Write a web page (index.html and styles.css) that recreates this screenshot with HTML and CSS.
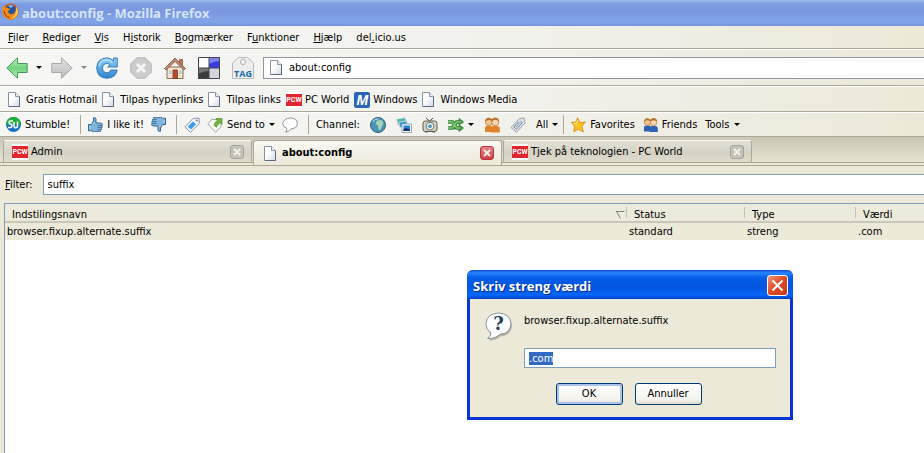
FILE: index.html
```html
<!DOCTYPE html>
<html lang="da">
<head>
    <meta charset="UTF-8">
    <meta name="viewport" content="width=device-width, initial-scale=1.0">
    <title>about:config - Mozilla Firefox</title>
    <link rel="stylesheet" href="styles.css">
</head>
<body>
    <!-- shared icons -->
    <svg class="defs" width="0" height="0">
        <defs>
            <linearGradient id="green" x1="0" y1="0" x2="0" y2="1">
                <stop offset="0" stop-color="#c9f5c0"/><stop offset="0.5" stop-color="#6fd27e"/><stop offset="1" stop-color="#b5efb0"/>
            </linearGradient>
            <linearGradient id="grey" x1="0" y1="0" x2="0" y2="1">
                <stop offset="0" stop-color="#e2e2e2"/><stop offset="1" stop-color="#bcbcbc"/>
            </linearGradient>
            <linearGradient id="blue" x1="0" y1="0" x2="0" y2="1">
                <stop offset="0" stop-color="#8fd0f5"/><stop offset="1" stop-color="#2f83cc"/>
            </linearGradient>
            <linearGradient id="paper" x1="0" y1="0" x2="1" y2="1">
                <stop offset="0.4" stop-color="#ffffff"/><stop offset="1" stop-color="#d3dbe6"/>
            </linearGradient>
            <symbol id="page" viewBox="0 0 12 15">
                <path d="M.5.5h7l4 4v10H.5z" fill="url(#paper)" stroke="#8592a6"/>
                <path d="M7.500.5v4h4" fill="#eef1f6" stroke="#8592a6"/>
                <path d="M1 14.500h10.500V5" fill="none" stroke="#5b6a80"/>
            </symbol>
            <symbol id="arrow" viewBox="0 0 22 22">
                <path d="M.8 11 11.500.8v5.700h9.700v9H11.500v5.700z"/>
            </symbol>
            <symbol id="thumb" viewBox="0 0 15 15">
                <path d="M.5 7.500h3l2-3.500V.8q2-.8 2.600 1.400l-.3 3.600 5.200.4q1.600.2 1.400 1.500l-.6 1.200.3 1.400-.8 1 .1 1.400-1 .7-.3 1.400H5.500l-2-1h-3z" fill="#7fb4dc" stroke="#34658f"/>
                <path d="M9.500 8.500h4M9.500 10.500h4M9.500 12.500h3" stroke="#34658f" stroke-width=".8"/>
                <path d="M2 9v3M4.500 7.500 7 5" stroke="#b8dcf3"/>
            </symbol>
            <symbol id="people" viewBox="0 0 16 16">
                <path d="M1 15v-4q0-2.500 3-2.500h2.500q2.500.5 2.500 3V15z" class="left"/>
                <path d="M7 15.500V11q0-2 3-2h3q2.800 0 2.800 3v3.500z" class="right"/>
                <circle cx="4.800" cy="5" r="3.400" fill="#f3c593" stroke="#a5642a" stroke-width=".6"/>
                <circle cx="11.200" cy="5.200" r="3.600" fill="#f8d4a8" stroke="#a5642a" stroke-width=".6"/>
                <path d="M1 4.500Q1.500.5 5 .8q2 .2 2.800 1.500Q9 .5 11.500.6q3.600.3 3.600 4.200-1.500-2-4-2-2 0-3 1.800-1.200-1.700-3-1.600Q2.800 3 1 4.500z" fill="#b8722c"/>
            </symbol>
        </defs>
    </svg>

    <header class="titlebar">
        <svg class="fox" width="17" height="17" viewBox="0 0 17 17">
            <circle cx="8.500" cy="8.500" r="8" fill="#d95b0b"/>
            <circle cx="8.800" cy="7" r="5.400" fill="#2c4f9c"/>
            <path d="M6 2.500q3-1.500 6 .5-2 .3-2.500 2-2-.2-3.500-2.500z" fill="#7fb0e8"/>
            <path d="M1 3q1.500.4 2.400 1.600 1.800-.4 3 .8 1 .4 2 .4-.3 1.400-2 1.800-.8 1.800.8 3 2.700 1.400 5-.6 2.200-2 1.300-5.400 2.600 2.200 2.300 5.800-.8 4.600-5.300 6Q4.500 17 1.500 12.500-.8 7.500 1 3z" fill="#f28a16"/>
            <path d="M14 3.500q2.800 3.500 1.300 7.500-2 4.300-6.300 4.600 3.500-1.800 4.600-5 1-3.300.4-7.100z" fill="#fbd24a"/>
            <path d="M2 8q.5 5 5.500 6.500" fill="none" stroke="#8a2c05"/>
        </svg>
        <span>about:config - Mozilla Firefox</span>
    </header>

    <div class="chrome">
        <nav class="menubar">
            <a href="#"><u>F</u>iler</a>
            <a href="#"><u>R</u>ediger</a>
            <a href="#"><u>V</u>is</a>
            <a href="#">H<u>i</u>storik</a>
            <a href="#"><u>B</u>ogmærker</a>
            <a href="#">F<u>u</u>nktioner</a>
            <a href="#"><u>H</u>jælp</a>
            <a href="#">del<u>.</u>icio.us</a>
        </nav>

        <div class="toolbar nav-bar">
            <button class="back" aria-label="Tilbage">
                <svg width="22" height="22" fill="url(#green)" stroke="#3f9a5c"><use href="#arrow"/></svg>
                <i class="caret"></i>
            </button>
            <button class="forward" aria-label="Frem">
                <svg class="flip" width="22" height="22" fill="url(#grey)" stroke="#aaaaaa"><use href="#arrow"/></svg>
                <i class="caret dim"></i>
            </button>
            <button aria-label="Genindlæs">
                <svg width="22" height="22" viewBox="0 0 22 22">
                    <path d="M17.500 1v3Q14.500.8 10.800.8.8 1.500.7 11.200 1.200 21 11 21.300q9-.5 10.200-8.300h-6.400q-1 2.800-3.800 2.800-4.300-.3-4.500-4.800.3-4.300 4.500-4.500 1.600 0 3 1.300L11.500 10h9.800V1z" fill="url(#blue)" stroke="#2a74b4" stroke-width=".9"/>
                    <path d="M3 9q1.500-5.500 8-6 3 0 5.500 2.500" fill="none" stroke="#bfe6fb" stroke-width="1.200"/>
                </svg>
            </button>
            <button aria-label="Stop">
                <svg width="22" height="22" viewBox="0 0 22 22">
                    <path d="M6.800.8h8.400l6 6v8.400l-6 6H6.800l-6-6V6.800z" fill="#cccccc" stroke="#b2b2b2"/>
                    <path d="m7 7 8 8M15 7l-8 8" stroke="#f7f7f7" stroke-width="3"/>
                </svg>
            </button>
            <button aria-label="Hjem">
                <svg width="22" height="22" viewBox="0 0 22 22">
                    <path d="M3 10h16v11.500H3z" fill="#f3e3cf" stroke="#8c6c56"/>
                    <path d="M15.500 2.500h3V9h-3z" fill="#c77052" stroke="#8c4e3c" stroke-width=".8"/>
                    <path d="M11 1 .5 11.500l1.500 1.500 9-8.500 9 8.500 1.500-1.500z" fill="#b98a76" stroke="#7c5545" stroke-width=".8"/>
                    <path d="M9 13h4.500v8.500H9z" fill="#b84b2d" stroke="#7c3a25" stroke-width=".8"/>
                    <path d="M5 14h2.500v3H5zM15 14h2.500v3H15z" fill="#b4cfe0"/>
                </svg>
            </button>
            <button aria-label="del.icio.us">
                <svg width="22" height="22" viewBox="0 0 22 22">
                    <path d="M0 0h11v11H0z" fill="#fff"/>
                    <path d="M11 0h11v11H11z" fill="#3a3ce0"/>
                    <path d="M0 11h11v11H0z" fill="#3c3c3c"/>
                    <path d="M11 11h11v11H11z" fill="#d4d4dc"/>
                    <path d="M11 7q5-3 11-3V0H11z" fill="#7f82f2"/>
                    <path d="M0 17q5-3 11-3v-3H0z" fill="#777"/>
                    <path d="M.5.5h21v21H.5zM11 0v22M0 11h22" fill="none" stroke="#44444c"/>
                </svg>
            </button>
            <button aria-label="Tag">
                <svg width="22" height="22" viewBox="0 0 22 22">
                    <path d="M6.500.5h9l6 5.500v15.500H.5V6z" fill="#eeeeee" stroke="#b9b9b9"/>
                    <circle cx="11" cy="5" r="2.500" fill="#fff" stroke="#aaa"/>
                    <text x="11" y="20" class="tag-text">TAG</text>
                </svg>
            </button>
            <label class="url">
                <svg width="12" height="15"><use href="#page"/></svg>
                <input type="text" value="about:config" aria-label="Adresse">
            </label>
        </div>

        <div class="toolbar bookmarks">
            <a href="#"><svg width="12" height="15"><use href="#page"/></svg>Gratis Hotmail</a>
            <a href="#"><svg width="12" height="15"><use href="#page"/></svg>Tilpas hyperlinks</a>
            <a href="#"><svg width="12" height="15"><use href="#page"/></svg>Tilpas links</a>
            <a href="#" class="site"><span class="pcw">PCW</span>PC World</a>
            <a href="#" class="site"><span class="msn">M</span>Windows</a>
            <a href="#"><svg width="12" height="15"><use href="#page"/></svg>Windows Media</a>
        </div>

        <div class="toolbar stumble">
            <div class="group">
                <button>
                    <svg width="15" height="15" viewBox="0 0 15 15">
                        <circle cx="7.500" cy="7.500" r="7.500" fill="#1a71c2"/>
                        <path d="M0 7.500a7.500 7.500 0 0 1 15 0z" fill="#1fae38"/>
                        <path d="M7 4H4.500Q3 4 3 5.500T4.500 7t1.500 1.700T4.500 10.500H2M8 5v4q0 1.800 1.800 1.800T11.500 9V4.500" fill="none" stroke="#fff" stroke-width="1.500"/>
                    </svg>Stumble!
                </button>
            </div>
            <div class="group like">
                <button><svg width="15" height="15"><use href="#thumb"/></svg>I like it!</button>
                <button aria-label="Not for me"><svg class="down" width="15" height="15"><use href="#thumb"/></svg></button>
            </div>
            <div class="group share">
                <button aria-label="Tag">
                    <svg width="16" height="16" viewBox="0 0 16 16">
                        <path d="M9 1.500 15 1l.4 5.500L6.500 15.300.8 10z" fill="#f3f6f9" stroke="#8a98a8"/>
                        <path d="m9 4.500 3 2.800L7 12.500 3.800 9.600z" fill="#3b9be6"/>
                        <circle cx="12.800" cy="3.500" r="1" fill="#6c7b8a"/>
                    </svg>
                </button>
                <button>
                    <svg width="16" height="16" viewBox="0 0 16 16">
                        <path d="M4.500 2.500h9.500V10l-5.500 5.200L.8 7z" fill="#f7f7f4" stroke="#a9aaa2"/>
                        <path d="M9 1.500h6v6l-1.800-1.800q-3 1.300-3.600 4.600L7 8.500q.3-3.300 3.600-5.400z" fill="#6fb53a" stroke="#3d8422" stroke-width=".6"/>
                    </svg>Send to<i class="caret"></i>
                </button>
                <button aria-label="Comment">
                    <svg width="16" height="16" viewBox="0 0 16 16">
                        <path d="M8.500 1q6.700.3 6.900 5.500-.2 5-6.400 5.300Q7 15 3.500 15.200q1.700-1.700 1.200-4Q.8 10 .7 6.500 1.500 1.300 8.500 1z" fill="#fff" stroke="#8d929b"/>
                    </svg>
                </button>
            </div>
            <div class="group channel">
                <span>Channel:</span>
                <button aria-label="Web">
                    <svg width="16" height="16" viewBox="0 0 16 16">
                        <circle cx="8" cy="8" r="7.500" fill="#4b93b8" stroke="#2c5f80"/>
                        <path d="M7 3.500 11.500 3l2 2.500-1.500 4-2 4-1.800-1.500L8 8.500 5.500 7z" fill="#a5d3b4"/>
                        <path d="M2.500 5Q4.500 1.500 8.500 1.800" fill="none" stroke="#c5e6ee"/>
                    </svg>
                </button>
                <button aria-label="Photos">
                    <svg width="16" height="16" viewBox="0 0 16 16">
                        <path d="m.5 2 9-1.500 1.300 6.500L2 8.500z" fill="#50b6a8" stroke="#dfe9ea"/>
                        <path d="m3 5 8-1v6l-7 .5z" fill="#319bd4" stroke="#c8d4da"/>
                        <path d="M6 7h9.500v8.500H6z" fill="#fff" stroke="#9aa5b0"/>
                        <path d="M7.500 8.500H14V14H7.500z" fill="#2184d8"/>
                        <path d="M7.500 14v-2l2.500-1 4 1.500V14z" fill="#122f66"/>
                    </svg>
                </button>
                <button aria-label="Video">
                    <svg width="16" height="16" viewBox="0 0 16 16">
                        <path d="M4 1l3.500 3L11 1" fill="none" stroke="#4c4b42"/>
                        <rect x="1" y="4" width="14" height="10.500" rx="2.500" fill="#d8d4c2" stroke="#5c5a4e"/>
                        <circle cx="8" cy="9.200" r="3.900" fill="#e9f0f2" stroke="#77776e"/>
                        <circle cx="8" cy="9.200" r="1.800" fill="#3f8fb5"/>
                        <path d="M3 15h2.500M10.500 15H13" stroke="#55544c"/>
                    </svg>
                </button>
                <button class="shuffle" aria-label="Shuffle">
                    <svg width="16" height="16" viewBox="0 0 16 16">
                        <path d="M0 5h4.500l4 6H12M0 11h4.500l4-6H12" fill="none" stroke="#2f7d31" stroke-width="3.500"/>
                        <path d="M11 1.500 15.500 5 11 8zM11 8l4.500 3-4.500 3.500z" fill="#3c9a3c" stroke="#2f7d31" stroke-width=".8"/>
                        <path d="M0 5h4.500l4 6H12M0 11h4.500l4-6H13" fill="none" stroke="#7dcb74" stroke-width="1.500"/>
                    </svg><i class="caret"></i>
                </button>
                <button aria-label="People"><svg class="orange" width="16" height="16"><use href="#people"/></svg></button>
                <button aria-label="Clip">
                    <svg width="16" height="16" viewBox="0 0 16 16">
                        <path d="M9.500 1.500 14 1l1.200 4.800-8.700 9.500L1 10.500z" fill="#dfe3e8" stroke="#98a1ac"/>
                        <path d="m10.500 4 1.800 1.600-5.800 6.600-2.600-2.200 4.700-5.200" fill="none" stroke="#758396"/>
                        <path d="m6 10 4.500-5" stroke="#6aa4d8"/>
                    </svg>
                </button>
                <button>All<i class="caret"></i></button>
            </div>
            <div class="group">
                <button>
                    <svg width="15" height="16" viewBox="0 0 15 16">
                        <path d="m6.500.8 2.300 4.700 5.500-.5-3.500 4.300 1.600 5.600-5-2.600-4.600 2.200.9-5L.5 5.300l4.500-.2z" fill="#fcc325" stroke="#d98910" stroke-width=".9"/>
                        <path d="M6.500 3 5.600 6.200l-3 .3" fill="none" stroke="#fff0a5"/>
                    </svg>Favorites
                </button>
                <button><svg class="redblue" width="15" height="16"><use href="#people"/></svg>Friends</button>
                <button>Tools<i class="caret"></i></button>
            </div>
        </div>
    </div>

    <div class="tabs">
        <div class="tab">
            <span class="pcw">PCW</span>
            <span class="tab-name">Admin</span>
            <button class="tab-close" aria-label="Luk"><svg width="8" height="8" viewBox="0 0 8 8"><path d="m1 1 6 6M7 1 1 7"/></svg></button>
        </div>
        <div class="tab active">
            <svg width="12" height="15"><use href="#page"/></svg>
            <span class="tab-name">about:config</span>
            <button class="tab-close" aria-label="Luk"><svg width="8" height="8" viewBox="0 0 8 8"><path d="m1 1 6 6M7 1 1 7"/></svg></button>
        </div>
        <div class="tab">
            <span class="pcw">PCW</span>
            <span class="tab-name">Tjek på teknologien - PC World</span>
            <button class="tab-close" aria-label="Luk"><svg width="8" height="8" viewBox="0 0 8 8"><path d="m1 1 6 6M7 1 1 7"/></svg></button>
        </div>
    </div>

    <main class="config">
        <div class="filter">
            <label for="filter"><u>F</u>ilter:</label>
            <input type="text" id="filter" value="suffix">
        </div>
        <div class="tree">
            <table>
                <thead>
                    <tr>
                        <th>Indstilingsnavn
                            <svg class="sort" width="9" height="8" viewBox="0 0 9 8"><path d="M8.500.5 4.500 7.500" stroke="#fff"/><path d="M0 .5h8.500M.5.5l4 7" fill="none" stroke="#85836f"/></svg>
                        </th>
                        <th class="status">Status</th>
                        <th class="type">Type</th>
                        <th class="value">Værdi</th>
                    </tr>
                </thead>
                <tbody>
                    <tr>
                        <td>browser.fixup.alternate.suffix</td>
                        <td>standard</td>
                        <td>streng</td>
                        <td>.com</td>
                    </tr>
                </tbody>
            </table>
        </div>
    </main>

    <form class="dialog" role="dialog" aria-labelledby="dialog-title">
        <div class="dialog-title">
            <span id="dialog-title">Skriv streng værdi</span>
            <button type="button" class="dialog-close" aria-label="Luk">
                <svg width="13" height="13" viewBox="0 0 13 13"><path d="m1.500 1.500 10 10M11.500 1.500l-10 10" stroke="#fff" stroke-width="2"/></svg>
            </button>
        </div>
        <div class="dialog-body">
            <div class="prompt">
                <svg width="28" height="30" viewBox="0 0 28 30">
                    <path d="M14.500 3q12 .6 12.500 10.800-.7 9.500-11 10.500Q11 28.800 3.500 28.500q4-2.500 3.300-6Q2 19.500 2 13.500 3 3.600 14.500 3z" fill="#b9b5a6"/>
                    <path d="M13.500 1q12 .6 12.500 10.800-.7 9.500-11 10.500Q10 27 2.500 26.500q4-2.500 3.300-6Q1 17.500 1 11.500 2 1.600 13.500 1z" fill="#fbfcfd" stroke="#8b949e"/>
                    <text x="13.500" y="18" class="question">?</text>
                </svg>
                <div class="fields">
                    <label for="value">browser.fixup.alternate.suffix</label>
                    <input type="text" id="value" value=".com">
                </div>
            </div>
            <div class="buttons">
                <button type="submit" class="ok">OK</button>
                <button type="button">Annuller</button>
            </div>
        </div>
    </form>

    <script>
        window.onload = function () {
            document.getElementById('value').select();
        };
    </script>
</body>
</html>
```

FILE: styles.css
```css
* {
    box-sizing: border-box;
}

body {
    display: flex;
    flex-direction: column;
    min-height: 100vh;
    margin: 0;
    overflow: hidden;
    background: #ece9d8;
    color: #000;
    font-family: "DejaVu Sans Condensed", "DejaVu Sans", sans-serif;
    font-size: 11px;
    line-height: 14px;
    white-space: nowrap;
}

a {
    color: inherit;
    text-decoration: none;
}

button,
input {
    margin: 0;
    padding: 0;
    border: none;
    background: none;
    color: inherit;
    font: inherit;
}

input {
    outline: none;
}

svg {
    display: block;
    flex: none;
}

.defs {
    position: absolute;
}

.caret {
    border: 3px solid transparent;
    border-top-color: #000;
    border-bottom: none;
}

.caret.dim {
    border-top-color: #888;
}

/* title bar */
.titlebar {
    display: flex;
    align-items: center;
    gap: 3px;
    height: 26px;
    padding-left: 2px;
    background: linear-gradient(#9db9eb 0, #7d9de2 4px, #7a96df 12px, #80a5e8 20px, #7fa3e7 23px, #7590dc 26px);
    color: #d8e4f8;
    font-family: "Open Sans", "Noto Sans", sans-serif;
    font-size: 13px;
    font-weight: bold;
}

.fox {
    margin-top: -3px;
}

/* toolbars */
.chrome {
    background: linear-gradient(to right, #f6f6f5, #f2f2ee 50%, #ece9d8);
}

.menubar {
    display: flex;
    gap: 14px;
    height: 23px;
    padding: 5px 8px 0;
    border-bottom: 1px solid #aca899;
}

.toolbar {
    display: flex;
    align-items: center;
    border-top: 1px solid #fff;
    border-bottom: 1px solid #aca899;
}

.toolbar button,
.toolbar a {
    display: flex;
    align-items: center;
}

.nav-bar {
    gap: 12px;
    height: 37px;
    padding-left: 6px;
}

.nav-bar .back,
.nav-bar .forward {
    gap: 8px;
    margin-right: -3px;
}

.flip {
    transform: scaleX(-1);
}

.tag-text {
    fill: #1668a8;
    font-family: "Open Sans", sans-serif;
    font-size: 9px;
    font-weight: bold;
    text-anchor: middle;
}

.url {
    display: flex;
    flex: 1;
    align-items: center;
    gap: 7px;
    height: 22px;
    margin-left: -3px;
    padding-left: 6px;
    border: 1px solid #9694a3;
    border-right: none;
    background: #fff;
}

.url input {
    flex: 1;
}

.bookmarks {
    gap: 5px;
    height: 26px;
    padding: 1px 0 0 8px;
}

.bookmarks a {
    gap: 6px;
}

.bookmarks .site {
    gap: 3px;
}

.pcw {
    flex: none;
    width: 16px;
    height: 16px;
    border: solid #fff;
    border-width: 2px 0;
    background: #e0252f;
    color: #fff;
    font-family: Roboto, "Liberation Sans", sans-serif;
    font-size: 7px;
    font-weight: bold;
    line-height: 12px;
    text-align: center;
}

.msn {
    width: 16px;
    height: 16px;
    border-radius: 2px;
    background: #2b66b4;
    color: #fff;
    font-family: "Liberation Sans", sans-serif;
    font-size: 14px;
    font-style: italic;
    font-weight: bold;
    line-height: 16px;
    text-align: center;
}

.stumble {
    height: 25px;
    padding-left: 6px;
}

.stumble button {
    gap: 4px;
}

.group {
    display: flex;
    align-items: center;
    height: 19px;
    gap: 8px;
    padding-right: 10px;
}

.group + .group {
    padding-left: 7px;
    border-left: 1px solid #aca899;
}

.group.like,
.group.share {
    gap: 7px;
}

.group.channel {
    gap: 10px;
    padding-right: 5px;
}

.down {
    transform: rotate(180deg);
}

.orange {
    fill: #e0832a;
}

.redblue .left {
    fill: #d93a22;
}

.redblue {
    fill: #2f62b4;
}

/* tabs */
.tabs {
    display: flex;
    gap: 1px;
    height: 29px;
    padding: 3px 3px 0;
    border-bottom: 1px solid #aca899;
    background: linear-gradient(#c9c6b6, #e6e3d3 25px, #aca899 25px, #aca899 26px, #ece9d8 26px);
}

.tab {
    display: flex;
    flex: 0 1 249px;
    align-items: center;
    height: 23px;
    padding: 1px 7px 0 8px;
    border: 1px solid #aca899;
    border-top-color: #f7f6f0;
    border-radius: 3px 3px 0 0;
    background: linear-gradient(#e3e1d6, #d5d2c4 55%, #dfdccd);
}

.tab.active {
    height: 25px;
    padding: 0 7px 0 10px;
    border-top-color: #aca899;
    border-bottom: none;
    background: linear-gradient(#f8f7f3, #ece9d8);
    font-weight: bold;
}

.tab-name {
    flex: 1;
    margin-left: 3px;
}

.active .tab-name {
    margin-left: 6px;
}

.tab-close {
    display: flex;
    align-items: center;
    justify-content: center;
    width: 14px;
    height: 14px;
    border: 1px solid #a5a396;
    border-radius: 3px;
    background: #c5c3b8;
}

.tab-close path {
    stroke: #f0efe8;
    stroke-width: 2;
}

.active .tab-close {
    border-color: #b03238;
    background: linear-gradient(#e8848a, #cf3d45);
}

/* about:config */
.config {
    display: flex;
    flex: 1;
    flex-direction: column;
    gap: 8px;
    padding: 8px 0 0 4px;
}

.filter {
    display: flex;
    align-items: center;
    gap: 10px;
    padding-left: 1px;
}

.filter input {
    flex: 1;
    height: 21px;
    padding-left: 4px;
    border: 1px solid #7f9db9;
    border-right: none;
    background: #fff;
}

.tree {
    flex: 1;
    border: solid #7f9db9;
    border-width: 1px 0 0 1px;
    background: #fff;
}

table {
    width: 100%;
    border-collapse: collapse;
    table-layout: fixed;
}

th,
td {
    padding: 0 2px;
    text-align: left;
    font-weight: normal;
}

th {
    height: 18px;
    padding: 3px 2px 0 7px;
    border-bottom: 2px solid #cbc7b8;
    background: linear-gradient(#c5c2b2, #c5c2b2) right center / 1px 11px no-repeat #ebeadb;
    line-height: 13px;
}

th:last-child {
    background: #ebeadb;
}

td {
    height: 18px;
    background: #ece9d8;
}

.sort {
    float: right;
    margin-top: 3px;
}

.status {
    width: 118px;
}

.type {
    width: 111px;
}

.value {
    width: 68px;
}

/* prompt */
.dialog {
    position: absolute;
    top: 270px;
    left: 467px;
    width: 326px;
    border: 3px solid #0a35d5;
    border-top: none;
    border-radius: 6px 6px 0 0;
    background: #ece9d8;
}

.dialog-title {
    display: flex;
    align-items: center;
    justify-content: space-between;
    height: 29px;
    margin: 0 -3px;
    padding: 2px 5px 0 6px;
    border-radius: 6px 6px 0 0;
    background: linear-gradient(#0a4fd0, #2a86fb 3px, #0560ea 7px, #0455e0 17px, #0667f8 25px, #0340c8);
    color: #fff;
    font-family: "Open Sans", "Noto Sans", sans-serif;
    font-size: 13px;
    font-weight: bold;
    text-shadow: 1px 1px #0a2a80;
}

.dialog-close {
    display: flex;
    align-items: center;
    justify-content: center;
    width: 21px;
    height: 21px;
    border: 1px solid #fff;
    border-radius: 3px;
    background: linear-gradient(135deg, #ee9478, #dd4a26 50%, #c63a18);
}

.dialog-body {
    padding: 13px 14px 12px 15px;
}

.prompt {
    display: flex;
    align-items: flex-start;
    gap: 11px;
}

.fields {
    display: flex;
    flex: 1;
    flex-direction: column;
    gap: 20px;
    padding-top: 2px;
}

.fields input {
    height: 20px;
    padding-left: 4px;
    border: 1px solid #7f9db9;
    background: #fff;
}

.fields input::selection {
    background: #316ac5;
    color: #fff;
}

.question {
    fill: #24405c;
    font-family: "DejaVu Serif", serif;
    font-size: 18px;
    font-weight: bold;
    text-anchor: middle;
}

.buttons {
    display: flex;
    justify-content: center;
    gap: 12px;
    margin-top: 15px;
    padding-right: 4px;
}

.buttons button {
    width: 67px;
    height: 22px;
    border: 1px solid #003c74;
    border-radius: 3px;
    background: linear-gradient(#fff, #f3f2ec 80%, #dcd8cb);
}

.buttons .ok {
    box-shadow: inset 0 0 0 2px #a9c3ee;
}
```
